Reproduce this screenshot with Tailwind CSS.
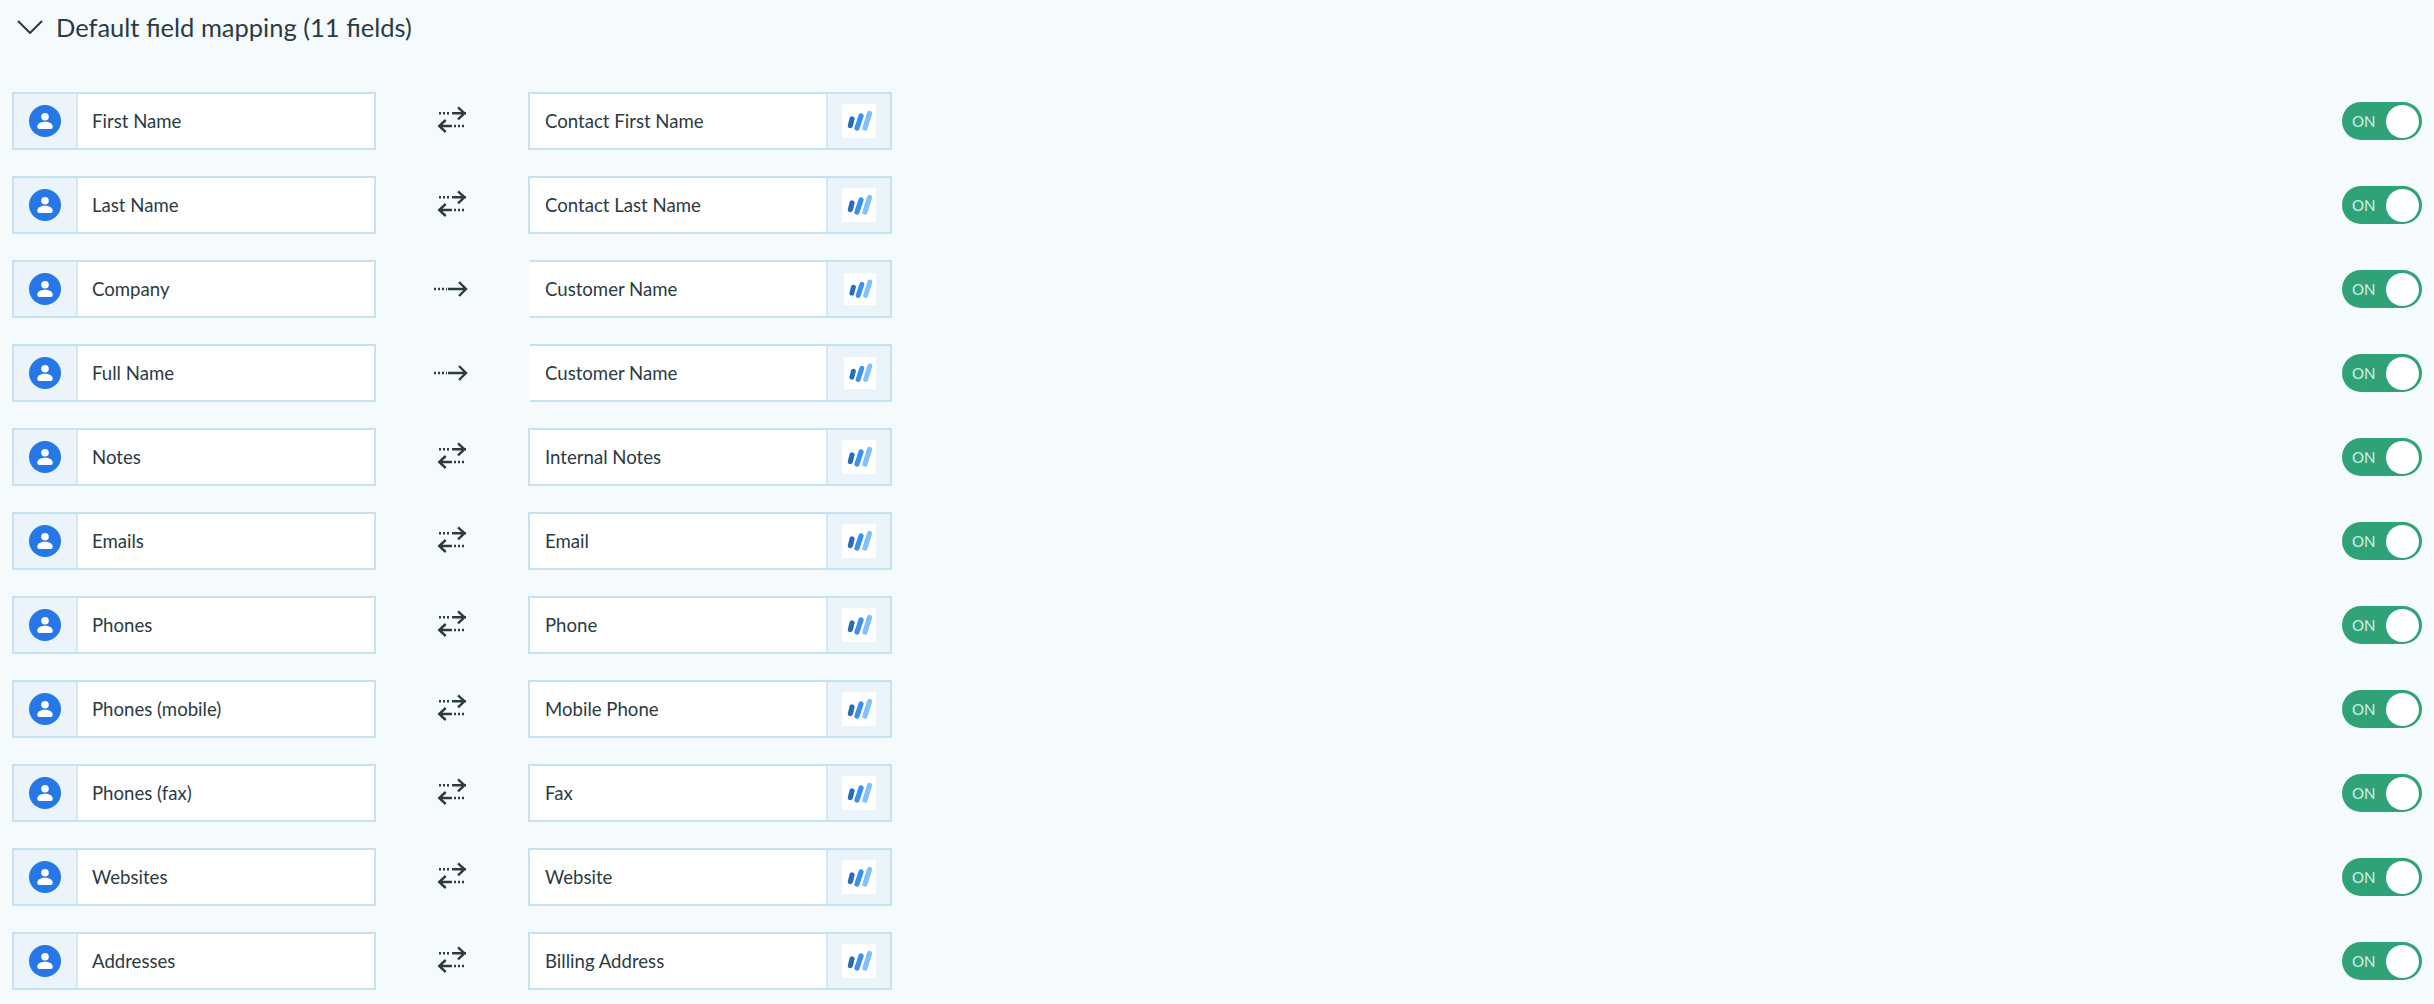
<!DOCTYPE html>
<html lang="en">
<head>
    <meta charset="UTF-8">
    <meta name="viewport" content="width=device-width, initial-scale=1.0">
    <title>Default field mapping</title>
    <script src="https://cdn.jsdelivr.net/npm/@tailwindcss/browser@4"></script>
</head>
<body class="bg-[#f5fafd] h-screen overflow-hidden font-['Lato',sans-serif] text-[#2c3a42]">
    <svg class="hidden">
        <symbol id="person" viewBox="0 0 32 32">
            <circle cx="16" cy="16" r="16" fill="#2678e8"/>
            <circle cx="16" cy="11.700" r="3.800" fill="#fff"/>
            <path d="M8.300 21.500c0-3.200 4-4.800 7.700-4.800s7.700 1.600 7.700 4.800V22a2 2 0 0 1-2 2H10.300a2 2 0 0 1-2-2z" fill="#fff"/>
        </symbol>
        <symbol id="wave" viewBox="0 0 34 34">
            <rect width="34" height="34" fill="#fff"/>
            <g fill="none" stroke-linecap="round" stroke-width="5.200">
                <path d="M10 15 8.400 21.500" stroke="#2a6db0"/>
                <path d="M19 12 15 24" stroke="#3d8ff0"/>
                <path d="M27.500 9.500 23 24" stroke="#7fc0ff"/>
            </g>
        </symbol>
        <symbol id="both" viewBox="0 0 40 32">
            <g fill="none" stroke="#2c3a42" stroke-width="2.400">
                <path d="M7 8.300h11" stroke-dasharray="2 2"/>
                <path d="M20 8.300h14M26 2.300l6.500 6-6.500 6"/>
                <path d="M22 21h11" stroke-dasharray="2 2"/>
                <path d="M20 21H7M13.700 15l-6.500 6 6.500 6"/>
            </g>
        </symbol>
        <symbol id="one" viewBox="0 0 40 32">
            <g fill="none" stroke="#2c3a42" stroke-width="2.400">
                <path d="M2 16h13" stroke-dasharray="2 2"/>
                <path d="M16 16h18M27 9l7 7-7 7"/>
            </g>
        </symbol>
    </svg>

    <div class="flex items-center h-[54px] pl-[17px]">
        <svg class="w-[26px] h-[14px] mr-[13px]" viewBox="0 0 26 14" fill="none" stroke="#2c3a42" stroke-width="2"><path d="M1 1l12 12L25 1"/></svg>
        <h2 class="text-[25.500px] leading-8">Default field mapping (11 fields)</h2>
    </div>

    <div id="rows" class="mt-[38px] pl-[12px] pr-[12px] flex flex-col gap-[26px]"></div>

    <script>
        const fields = [
            ['First Name', 'Contact First Name', true],
            ['Last Name', 'Contact Last Name', true],
            ['Company', 'Customer Name', false],
            ['Full Name', 'Customer Name', false],
            ['Notes', 'Internal Notes', true],
            ['Emails', 'Email', true],
            ['Phones', 'Phone', true],
            ['Phones (mobile)', 'Mobile Phone', true],
            ['Phones (fax)', 'Fax', true],
            ['Websites', 'Website', true],
            ['Addresses', 'Billing Address', true]
        ];

        document.getElementById('rows').innerHTML = fields.map(([left, right, both]) => `
            <div class="flex items-center h-[58px]">
                <div class="flex w-[364px] h-full border-2 border-[#c5e2f0] bg-white">
                    <div class="flex items-center justify-center w-[64px] bg-[#ebf4fb] border-r-2 border-[#d3e8f3] shrink-0">
                        <svg class="w-8 h-8"><use href="#person"/></svg>
                    </div>
                    <div class="flex items-center pl-[14px] pt-[1px] text-[18.600px]">${left}</div>
                </div>
                <div class="flex justify-center w-[152px]">
                    <svg class="w-10 h-8"><use href="${both ? '#both' : '#one'}"/></svg>
                </div>
                <div class="flex h-full bg-white border-2 border-[#c5e2f0] ${both ? 'w-[364px]' : 'w-[362px] ml-[2px] border-l-0'}">
                    <div class="flex items-center flex-1 pl-[15px] pt-[1px] text-[18.600px]">${right}</div>
                    <div class="flex items-center justify-center w-[64px] bg-[#ebf4fb] border-l-2 border-[#d3e8f3] shrink-0 ${both ? 'pl-0' : 'pl-[2px]'}">
                        <svg class="${both ? 'w-[34px] h-[34px]' : 'w-[32px] h-[34px]'}"><use href="#wave"/></svg>
                    </div>
                </div>
                <div class="flex items-center ml-auto w-20 h-[38px] rounded-full bg-[#2fa377] pl-[10px] pr-[3px]">
                    <span class="text-[15px] leading-none text-[#d8efe6]">ON</span>
                    <span class="ml-auto w-[33px] h-[33px] rounded-full bg-white"></span>
                </div>
            </div>
        `).join('');
    </script>
</body>
</html>
